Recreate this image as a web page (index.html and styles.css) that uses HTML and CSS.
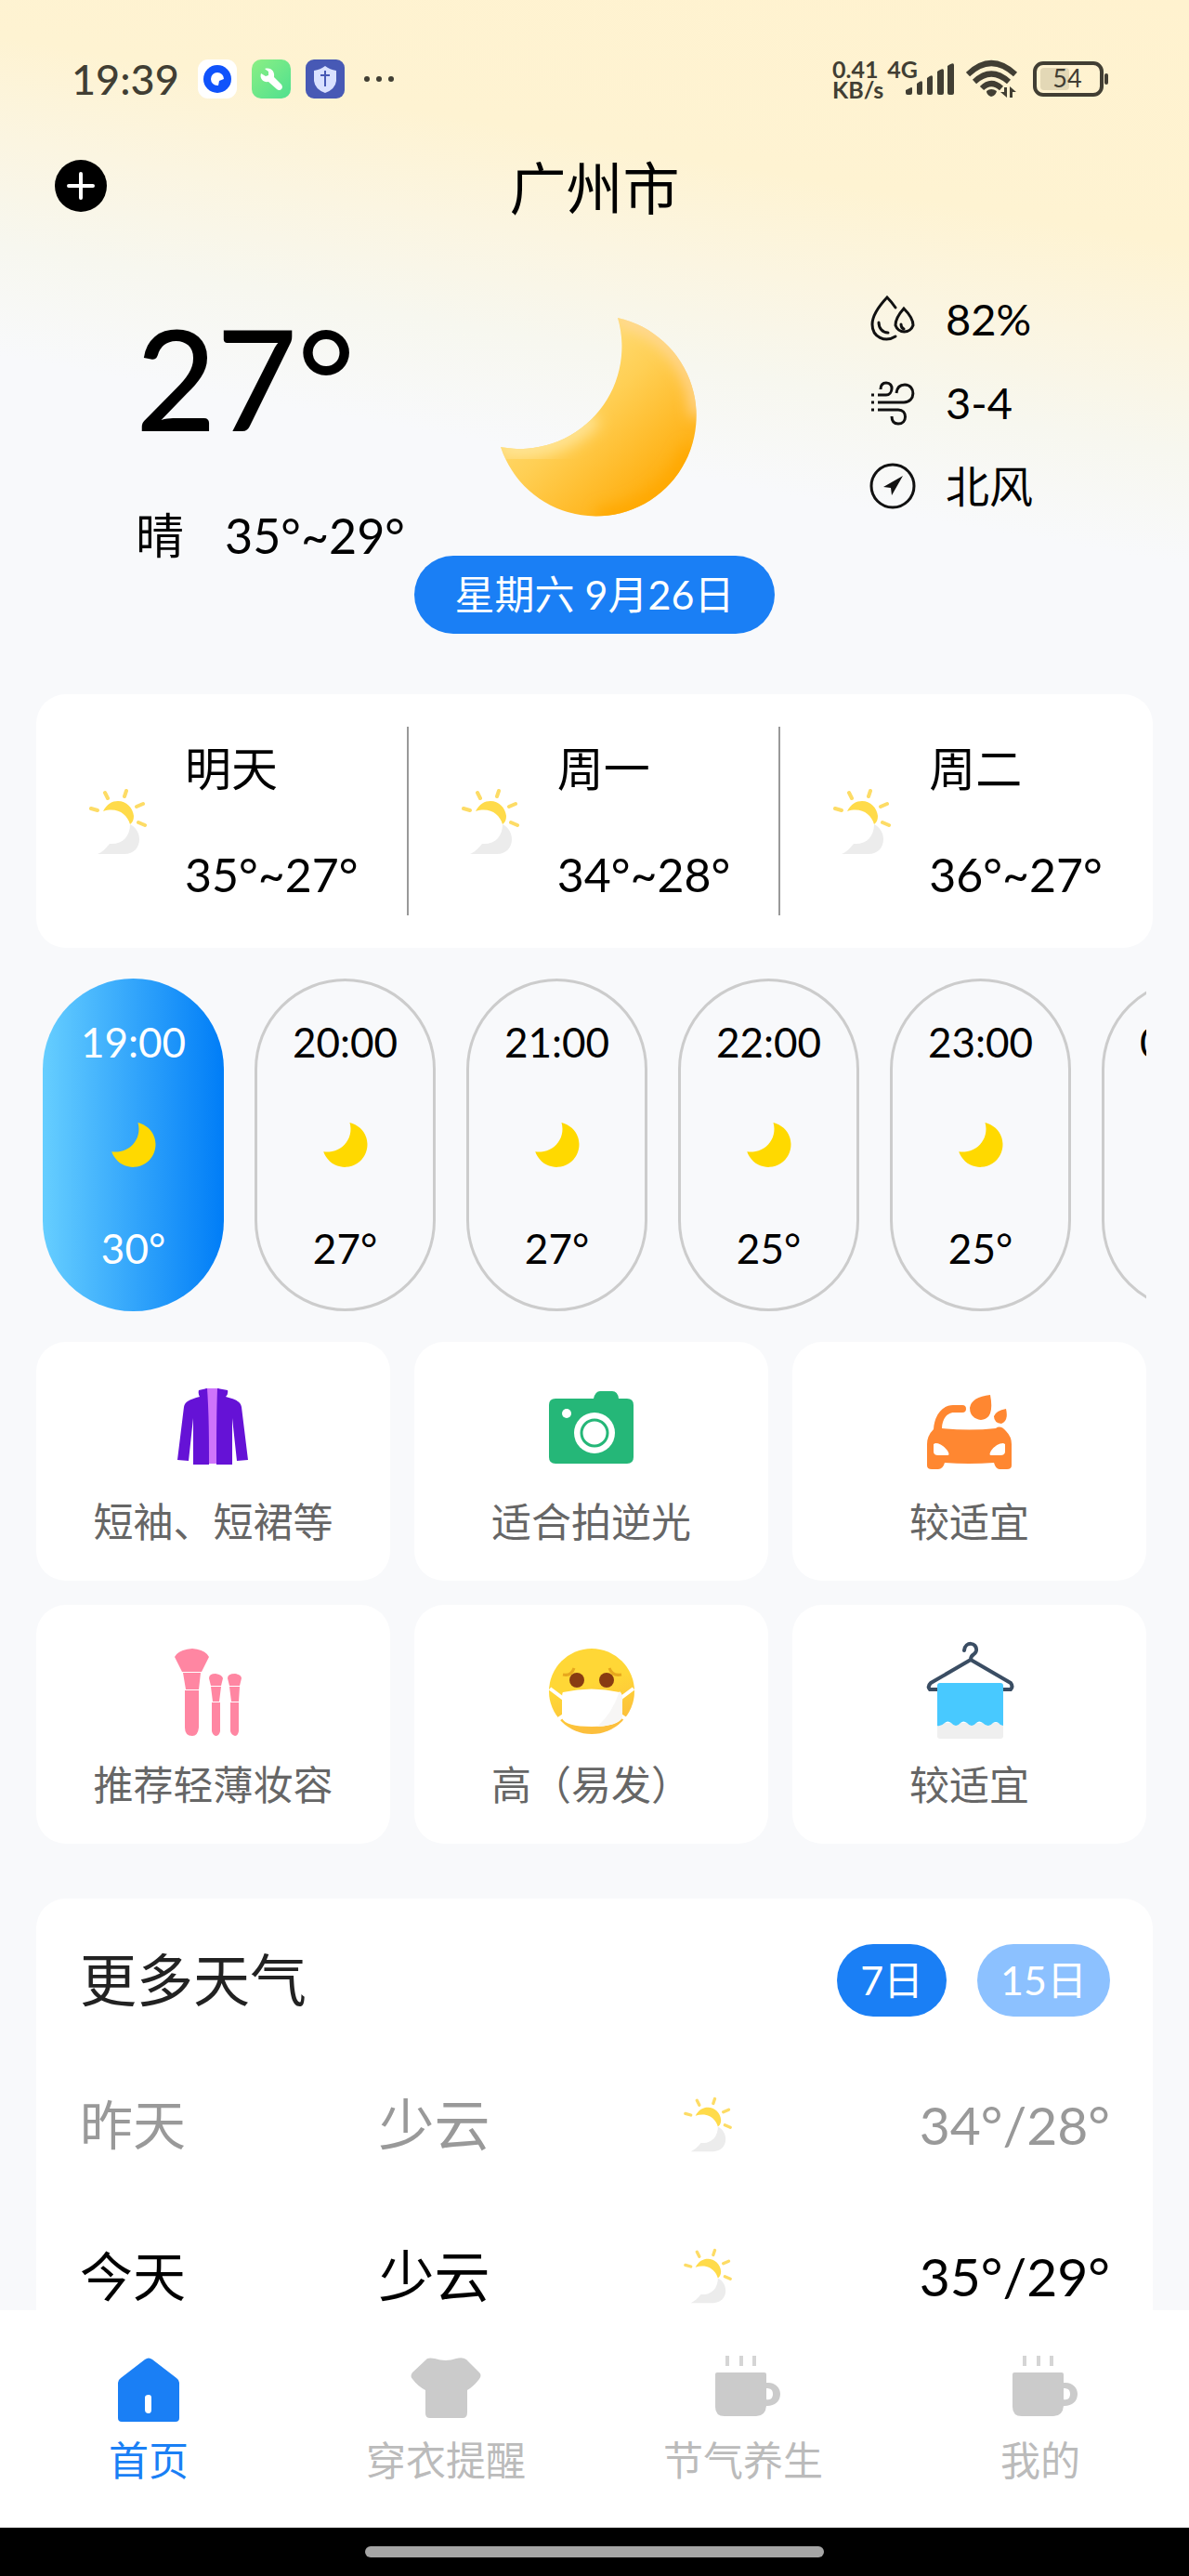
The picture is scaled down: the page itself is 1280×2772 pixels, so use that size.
FILE: index.html
```html
<!DOCTYPE html>
<html lang="zh-CN">
<head>
    <meta charset="UTF-8">
    <meta name="viewport" content="width=device-width, initial-scale=1.0">
    <title>广州市</title>
    <link rel="stylesheet" href="styles.css">
</head>
<body>
    <!-- shared shapes -->
    <svg class="sprite" aria-hidden="true">
        <symbol id="moon" viewBox="0 0 212 214">
            <path d="M126 0A108 108 0 1 1 0 139A110 110 0 0 0 126 0Z"/>
        </symbol>
        <symbol id="suncloud" viewBox="0 0 62 72">
            <g fill="none" stroke="#fddc66" stroke-width="4" stroke-linecap="round">
                <path d="M2 22L9 24M17 5L20 11M40 3L38 9M58 17L51 20M53 37L60 40"/>
            </g>
            <path fill="#ffdb4a" d="M15 25C19 17 25 14 31 14C40 14 47 21 48 30C48 34 47 37 44 39C41 28 30 20 15 25Z"/>
            <path fill="#ececec" d="M44 39C50 42 54 48 54 55C54 64 48 71 38 71H9C14 69 18 65 22 60C36 61 44 52 44 39Z"/>
        </symbol>
        <symbol id="cup" viewBox="0 0 70 66">
            <path fill="#d5d5d5" d="M11 0h4v11h-4zM26 0h4v11h-4zM40 0h4v11h-4z"/>
            <path fill="#cbcbcb" fill-rule="evenodd" d="M2 18H53Q55 18 55 20V29H57C65 29 70 35 70 41C70 49 64 54 56 54H55Q54 65 44 65H10Q0 65 0 55V20Q0 18 2 18ZM55 35V47C60 48 62 45 62 41C62 37 60 35 55 35Z"/>
        </symbol>
    </svg>

    <div class="app">
        <div class="screen">
            <div class="status-bar">
                <span class="clock">19:39</span>
                <div class="notices">
                    <svg width="42" height="42" viewBox="0 0 42 42"><rect width="42" height="42" rx="11" fill="#fff"/><circle cx="21" cy="21" r="15" fill="#1053fb"/><path fill="#fff" d="M21 14a7 7 0 0 1 7 7l-5 2-1 5h-1a7 7 0 0 1 0-14z"/></svg>
                    <svg width="42" height="42" viewBox="0 0 42 42"><defs><linearGradient id="green" x1="0" y1="0" x2="1" y2="1"><stop stop-color="#8bef84"/><stop offset="1" stop-color="#4fe08f"/></linearGradient></defs><rect width="42" height="42" rx="10" fill="url(#green)"/><path fill="#fff" d="M10 15C8 21 13 25 18 24L27 32C30 35 35 31 32 27L24 19C25 13 21 8 14 10L18 13V17L15 18L10 15Z"/></svg>
                    <svg width="42" height="42" viewBox="0 0 42 42"><rect width="42" height="42" rx="9" fill="#4759b5"/><path fill="#d9e1ff" d="M21 7Q26 11 33 12V23Q32 32 21 36Q10 32 9 23V12Q16 11 21 7Z"/><path stroke="#4759b5" stroke-width="2" d="M21 12V29M16 17H26"/></svg>
                    <svg class="dots" width="42" height="8" viewBox="-4 0 42 8"><g fill="#413e33"><circle cx="4" cy="4" r="3"/><circle cx="17" cy="4" r="3"/><circle cx="30" cy="4" r="3"/></g></svg>
                </div>
                <div class="net-speed"><span>0.41</span><span>KB/s</span></div>
                <span class="net-type">4G</span>
                <svg class="signal" width="54" height="36" viewBox="0 0 54 36"><path fill="#413e33" d="M1 30L7 27Q8 27 8 28V33Q8 35 6 35H3Q1 35 1 33ZM13 23Q19 18 19 22V33Q19 35 17 35H15Q13 35 13 33ZM24 17Q30 12 30 16V33Q30 35 28 35H26Q24 35 24 33ZM35 10Q42 5 42 9V33Q42 35 40 35H37Q35 35 35 33ZM46 4Q53 -1 53 3V33Q53 35 51 35H48Q46 35 46 33Z"/></svg>
                <svg width="56" height="42" viewBox="0 0 56 42"><g fill="none" stroke="#413e33" stroke-width="6"><path d="M2 16Q27 -8 53 16M9 24Q27 7 46 24M17 31Q27 21 38 31"/></g><path fill="#413e33" d="M22 34Q27 30 33 34Q32 39 27 40Q22 38 22 34ZM41 30h3v11L37 35h4zM47 41V29L54 35H50V41Z"/></svg>
                <svg class="battery" width="82" height="38" viewBox="0 0 82 38"><rect x="2" y="2" width="72" height="34" rx="9" fill="none" stroke="#413e33" stroke-width="4"/><rect x="8" y="7" width="31" height="24" rx="4" fill="#e3d8b6"/><rect x="77" y="13" width="4" height="12" rx="2" fill="#413e33"/><text x="37" y="28" text-anchor="middle">54</text></svg>
            </div>

            <header class="header">
                <button class="add" aria-label="添加城市">
                    <svg width="58" height="58" viewBox="0 0 58 58"><circle cx="29" cy="29" r="28" fill="#000"/><path stroke="#fff" stroke-width="4" stroke-linecap="round" d="M29 16V42M16 29H42"/></svg>
                </button>
                <h1>广州市</h1>
            </header>

            <section class="hero">
                <div class="now">
                    <div class="temp">27°</div>
                    <div class="range"><span>晴</span><span>35°~29°</span></div>
                </div>
                <div class="sky">
                    <svg width="222" height="214" viewBox="-10 0 222 214">
                        <defs>
                            <linearGradient id="gold" x1="0.2" y1="0.15" x2="0.82" y2="0.85"><stop stop-color="#ffe282"/><stop offset="0.45" stop-color="#ffcf54"/><stop offset="1" stop-color="#ffad0c"/></linearGradient>
                            <filter id="soft" x="-30%" y="-30%" width="160%" height="160%"><feGaussianBlur stdDeviation="8"/></filter>
                            <clipPath id="cut"><path d="M126 0A108 108 0 1 1 0 139A110 110 0 0 0 126 0Z"/></clipPath>
                        </defs>
                        <g clip-path="url(#cut)">
                            <rect width="214" height="214" fill="url(#gold)"/>
                            <path d="M0 139A110 110 0 0 0 100 106" fill="none" stroke="#ffe598" stroke-width="20" filter="url(#soft)"/>
                            <path d="M126 0A108 108 0 0 1 212 106" fill="none" stroke="#ffd9a0" stroke-width="14" filter="url(#soft)"/>
                            <path d="M205 140A108 108 0 0 1 105 214" fill="none" stroke="#ffa800" stroke-width="18" filter="url(#soft)"/>
                        </g>
                    </svg>
                    <div class="date">星期六 9月26日</div>
                </div>
                <ul class="metrics">
                    <li>
                        <svg width="50" height="50" viewBox="0 0 50 50" fill="none" stroke="#111" stroke-width="3" stroke-linecap="round"><path d="M28 13Q24 7 19 2Q3 19 3 31C3 45 17 51 28 44"/><path d="M37 14Q28 24 28 32A10 10 0 0 0 47 32Q47 24 37 14Z"/><path d="M10 29C10 35 14 40 20 40M34 31Q34 35 37 36"/></svg>
                        <span>82%</span>
                    </li>
                    <li>
                        <svg width="50" height="50" viewBox="0 0 50 50" fill="none" stroke="#111" stroke-width="3"><path d="M9 17H18C25 17 27 4 18 4C13 4 12 8 12 11M9 25H37C50 25 50 6 38 6Q30 6 29 15M9 33H31C41 33 41 48 31 48Q24 48 24 40M2 17H5M2 25H5M2 33H5"/></svg>
                        <span>3-4</span>
                    </li>
                    <li>
                        <svg width="50" height="50" viewBox="0 0 50 50"><circle cx="25" cy="25" r="23" fill="none" stroke="#111" stroke-width="3"/><path fill="#111" d="M36 14L24 35L23 27L15 26Z"/></svg>
                        <span>北风</span>
                    </li>
                </ul>
            </section>

            <section class="days">
                <div class="day">
                    <svg width="62" height="72"><use href="#suncloud"/></svg>
                    <div><span>明天</span><span>35°~27°</span></div>
                </div>
                <div class="day">
                    <svg width="62" height="72"><use href="#suncloud"/></svg>
                    <div><span>周一</span><span>34°~28°</span></div>
                </div>
                <div class="day">
                    <svg width="62" height="72"><use href="#suncloud"/></svg>
                    <div><span>周二</span><span>36°~27°</span></div>
                </div>
            </section>

            <section class="hours">
                <div class="hour active"><span>19:00</span><svg width="48" height="48"><use href="#moon"/></svg><span>30°</span></div>
                <div class="hour"><span>20:00</span><svg width="48" height="48"><use href="#moon"/></svg><span>27°</span></div>
                <div class="hour"><span>21:00</span><svg width="48" height="48"><use href="#moon"/></svg><span>27°</span></div>
                <div class="hour"><span>22:00</span><svg width="48" height="48"><use href="#moon"/></svg><span>25°</span></div>
                <div class="hour"><span>23:00</span><svg width="48" height="48"><use href="#moon"/></svg><span>25°</span></div>
                <div class="hour"><span>00:00</span></div>
            </section>

            <section class="tips">
                <div class="tip">
                    <svg width="110" height="110" viewBox="0 0 110 110"><path fill="#cf74fb" d="M46 11H61L59 92H49Z"/><path fill="#6512d6" d="M39 13L48 11C50 40 50 65 50 93H33V43L28 89L16 88L23 31C24 25 29 23 40 20Q38 17 39 13ZM70 13L59 11C58 40 58 65 58 93H75V43L80 89L92 88L85 31C84 25 79 23 68 20Q71 17 70 13Z"/></svg>
                    <span>短袖、短裙等</span>
                </div>
                <div class="tip">
                    <svg width="110" height="110" viewBox="0 0 110 110"><path fill="#25b778" d="M16 22H57Q59 14 64 14H77Q83 14 84 22H93Q100 22 100 29V85Q100 92 93 92H16Q9 92 9 85V29Q9 22 16 22Z"/><circle cx="28" cy="38" r="5" fill="#fff"/><circle cx="58" cy="59" r="22" fill="#fff"/><circle cx="58" cy="59" r="14" fill="#fff" stroke="#25b778" stroke-width="3"/></svg>
                    <span>适合拍逆光</span>
                </div>
                <div class="tip">
                    <svg width="110" height="110" viewBox="0 0 110 110"><path fill="#ff8731" fill-rule="evenodd" d="M16 55C17 39 26 29 37 29H47Q51 29 51 33Q51 37 47 37H38C30 37 25 45 25 54Q55 57 83 54Q88 50 94 57Q100 63 100 71V94Q100 98 95 98H87Q83 98 81 91Q54 93 28 91Q26 98 21 98H14Q9 98 9 94V71Q9 62 16 55ZM16 71V79Q16 83 21 83H31Q34 83 31 78Q25 70 18 70ZM93 71V79Q93 83 88 83H78Q75 83 78 78Q84 70 91 70Z"/><path fill="#ff8731" d="M77 18Q82 44 67 45Q55 43 55 32Q57 20 77 18ZM94 33Q97 46 89 49Q81 48 81 41Q83 35 94 33Z"/></svg>
                    <span>较适宜</span>
                </div>
                <div class="tip">
                    <svg width="110" height="110" viewBox="0 0 110 110"><path fill="#ff86a2" d="M13 17Q17 9 32 8Q46 9 50 17L42 33H21ZM22 34H41L39 52H25ZM24 53H39V93Q38 102 32 102Q24 102 24 93ZM50 40Q50 35 57 35Q64 36 65 40L63 48H52ZM52 49H63L61 65H54ZM53 66H62V97Q61 102 57 102Q54 101 53 97ZM70 40Q70 35 78 35Q85 36 85 40L83 48H72ZM72 49H83L82 65H74ZM73 66H82V97Q81 102 78 102Q74 101 73 97Z"/></svg>
                    <span>推荐轻薄妆容</span>
                </div>
                <div class="tip">
                    <svg width="110" height="110" viewBox="0 0 110 110"><defs><linearGradient id="face" x1="0" y1="0" x2="0.3" y2="1"><stop offset="0.5" stop-color="#ffd736"/><stop offset="1" stop-color="#fcbf3c"/></linearGradient></defs><circle cx="55" cy="54" r="46" fill="url(#face)"/><path fill="none" stroke="#fff" stroke-width="4" d="M10 51L26 63M100 51L84 63M19 84L28 78M92 84L83 78"/><path fill="#fff" d="M24 55Q55 48 85 55Q89 57 88 66V82Q84 92 55 92Q27 92 23 83V62Q23 56 24 55Z"/><path fill="#f7f6f5" d="M85 54Q77 78 61 92Q84 90 88 82V62Q88 56 85 54Z"/><ellipse cx="39" cy="42" rx="8" ry="8" fill="#883b12"/><ellipse cx="71" cy="42" rx="8" ry="8" fill="#883b12"/><path fill="none" stroke="#e7a71e" stroke-width="3" d="M24 36Q33 38 36 29M74 29Q77 38 87 36"/></svg>
                    <span>高（易发）</span>
                </div>
                <div class="tip">
                    <svg width="110" height="110" viewBox="0 0 110 110"><g fill="none" stroke="#3a4d63" stroke-width="4" stroke-linecap="round" stroke-linejoin="round"><path d="M49 10C50 0 63 1 62 10C61 16 56 13 56 20L13 45Q9 49 12 52H99Q102 49 99 45L56 20"/></g><path fill="#efefef" d="M20 88H91V102Q91 105 88 105H23Q20 105 20 102Z"/><path fill="#48c9ff" d="M20 48Q20 45 23 45H88Q91 45 91 48V91Q88 91 86 88Q83 86 80 88Q75 94 69 88Q65 85 62 88Q57 94 52 88Q48 85 45 88Q40 94 35 88Q31 85 28 88Q24 92 20 91Z"/></svg>
                    <span>较适宜</span>
                </div>
            </section>

            <section class="more">
                <div class="more-head">
                    <h2>更多天气</h2>
                    <button class="active">7日</button>
                    <button>15日</button>
                </div>
                <table>
                    <tr class="past">
                        <td class="name">昨天</td>
                        <td class="desc">少云</td>
                        <td class="icon"><svg width="52" height="60"><use href="#suncloud"/></svg></td>
                        <td class="temps">34°/28°</td>
                    </tr>
                    <tr>
                        <td class="name">今天</td>
                        <td class="desc">少云</td>
                        <td class="icon"><svg width="52" height="60"><use href="#suncloud"/></svg></td>
                        <td class="temps">35°/29°</td>
                    </tr>
                </table>
            </section>
        </div>

        <nav class="tabs">
            <a href="#" class="active">
                <svg width="80" height="70" viewBox="0 0 80 70"><path fill="#1a7ff5" fill-rule="evenodd" d="M36 2Q40 -1 44 2L70 22Q73 24 73 27V65Q73 69 69 69H11Q7 69 7 65V27Q7 24 10 22ZM36 43V56Q36 60 40 60Q43 60 43 56V43Q43 40 40 40Q36 40 36 43Z"/></svg>
                <span>首页</span>
            </a>
            <a href="#">
                <svg width="80" height="70" viewBox="0 0 80 70"><path fill="#cbcbcb" d="M20 1Q23 0 28 1Q40 5 51 1Q58 -1 62 2L76 16Q79 19 76 23Q70 31 63 35V59Q63 65 58 65H23Q18 65 18 60V35Q10 31 4 23Q1 20 4 16Z"/></svg>
                <span>穿衣提醒</span>
            </a>
            <a href="#">
                <svg width="80" height="70" viewBox="-10 2 80 70"><use href="#cup" width="70" height="66"/></svg>
                <span>节气养生</span>
            </a>
            <a href="#">
                <svg width="80" height="70" viewBox="-10 2 80 70"><use href="#cup" width="70" height="66"/></svg>
                <span>我的</span>
            </a>
        </nav>
        <div class="gesture-bar"><div class="handle"></div></div>
    </div>
</body>
</html>
```
FILE: styles.css
```css
* {
    box-sizing: border-box;
}
body {
    margin: 0;
    font-family: Lato, "Noto Sans CJK SC", sans-serif;
    font-size: 43px;
    line-height: 60px;
    color: #000;
    background: #f8f9fb;
}
h1, h2, ul {
    margin: 0;
    padding: 0;
    font-weight: 400;
    list-style: none;
}
svg {
    display: block;
    flex: none;
}
button {
    border: none;
    padding: 0;
    font: inherit;
    cursor: pointer;
}
.sprite {
    position: absolute;
    width: 0;
    height: 0;
}
.app {
    display: flex;
    flex-direction: column;
    height: 100vh;
}
.screen {
    flex: 1;
    min-height: 0;
    overflow: hidden;
    background: linear-gradient(190deg, #fff2cf 0, #fef3d2 260px, #fbf5e1 370px, #f7f7ef 480px, #f8f9fb 600px);
}

/* status bar */
.status-bar {
    display: flex;
    align-items: center;
    height: 110px;
    padding: 60px 86px 0 77px;
    color: #413e33;
}
.clock {
    font-size: 45px;
    font-weight: 500;
}
.notices {
    display: flex;
    align-items: center;
    gap: 16px;
    margin: 0 auto 0 20px;
}
.net-speed {
    display: flex;
    flex-direction: column;
    font-size: 25px;
    font-weight: 700;
    line-height: 22px;
}
.net-type {
    align-self: flex-start;
    margin-left: 4px;
    font-size: 25px;
    font-weight: 700;
    line-height: 28px;
}
.signal {
    margin: 0 12px 0 -14px;
}
.battery {
    margin-left: 16px;
    font-size: 27px;
    fill: #413e33;
}

/* city */
.header {
    display: flex;
    align-items: center;
    height: 120px;
    padding: 60px 58px 0;
}
.header h1 {
    flex: 1;
    padding: 6px 58px 0 0;
    font-size: 61px;
    text-align: center;
}
.add {
    border-radius: 50%;
    background: none;
}

/* current weather */
.hero {
    display: grid;
    grid-template-columns: 1fr 388px 1fr;
    margin-bottom: 65px;
}
.now {
    padding: 96px 0 0 146px;
    white-space: nowrap;
}
.temp {
    font-size: 150px;
    font-weight: 500;
    line-height: 160px;
}
.range {
    display: flex;
    gap: 44px;
    margin-top: 60px;
    font-size: 52px;
}
.sky {
    display: flex;
    flex-direction: column;
    align-items: center;
    gap: 42px;
    padding-top: 112px;
}
.date {
    width: 100%;
    border-radius: 42px;
    background: #1a7ff5;
    color: #fff;
    line-height: 84px;
    text-align: center;
}
.metrics {
    display: flex;
    flex-direction: column;
    gap: 40px;
    padding: 88px 0 0 102px;
    font-size: 47px;
    line-height: 50px;
}
.metrics li {
    display: flex;
    align-items: center;
    gap: 32px;
}

/* next three days */
.days {
    display: grid;
    grid-template-columns: repeat(3, 1fr);
    margin: 0 39px;
    padding: 35px 0;
    border-radius: 32px;
    background: #fff;
    font-size: 50px;
}
.day {
    display: flex;
    align-items: center;
    gap: 41px;
    height: 203px;
    padding-left: 57px;
    border-right: 2px solid #999;
    white-space: nowrap;
}
.day:last-child {
    border-right: none;
}
.day div {
    display: flex;
    flex-direction: column;
    gap: 54px;
}

/* hourly forecast */
.hours {
    display: flex;
    gap: 33px;
    margin: 33px 46px 0;
    overflow: hidden;
}
.hour {
    display: flex;
    flex: none;
    flex-direction: column;
    align-items: center;
    justify-content: space-between;
    width: 195px;
    height: 358px;
    padding: 35px 0;
    border: 3px solid #ccc;
    border-radius: 98px;
    font-size: 44px;
}
.hour svg {
    fill: #ffd900;
}
.hour.active {
    padding: 38px 0;
    border: none;
    background: linear-gradient(90deg, #66ceff, #007df7);
    color: #fff;
}

/* life tips */
.tips {
    display: grid;
    grid-template-columns: repeat(3, 1fr);
    gap: 26px;
    margin: 33px 46px 0 39px;
}
.tip {
    display: flex;
    flex-direction: column;
    align-items: center;
    gap: 15px;
    padding: 39px 0 33px;
    border-radius: 32px;
    background: #fff;
    color: #666;
}

/* more days */
.more {
    margin: 59px 39px 0;
    padding: 49px 46px 0 47px;
    border-radius: 32px 32px 0 0;
    background: #fff;
}
.more-head {
    display: flex;
    align-items: center;
    gap: 33px;
}
.more-head h2 {
    flex: 1;
    color: #222;
    font-size: 61px;
}
.more-head button {
    padding: 0 25px;
    border-radius: 39px;
    background: #8cc1ff;
    color: #fff;
    line-height: 78px;
}
.more-head button.active {
    background: #1a7ff5;
}
table {
    width: 100%;
    margin-top: 34px;
    border-collapse: collapse;
    table-layout: fixed;
    font-size: 60px;
}
td {
    height: 163px;
    padding: 0;
}
.past {
    color: #999;
}
.name {
    width: 29%;
    font-size: 57px;
}
.desc {
    width: 23%;
}
.icon {
    width: 18%;
}
.icon svg {
    margin: 0 auto;
}
.temps {
    font-size: 57px;
    text-align: right;
}

/* bottom tabs */
.tabs {
    display: grid;
    grid-template-columns: repeat(4, 1fr);
    height: 234px;
    padding-top: 51px;
    background: #fff;
}
.tabs a {
    display: flex;
    flex-direction: column;
    align-items: center;
    gap: 11px;
    color: #bbb;
    text-decoration: none;
}
.tabs svg {
    overflow: visible;
}
.tabs a.active {
    color: #1a7ff5;
}
.gesture-bar {
    padding: 20px 0;
    background: #000;
}
.handle {
    width: 494px;
    height: 12px;
    margin: 0 auto;
    border-radius: 6px;
    background: #a5a5a5;
}
```
